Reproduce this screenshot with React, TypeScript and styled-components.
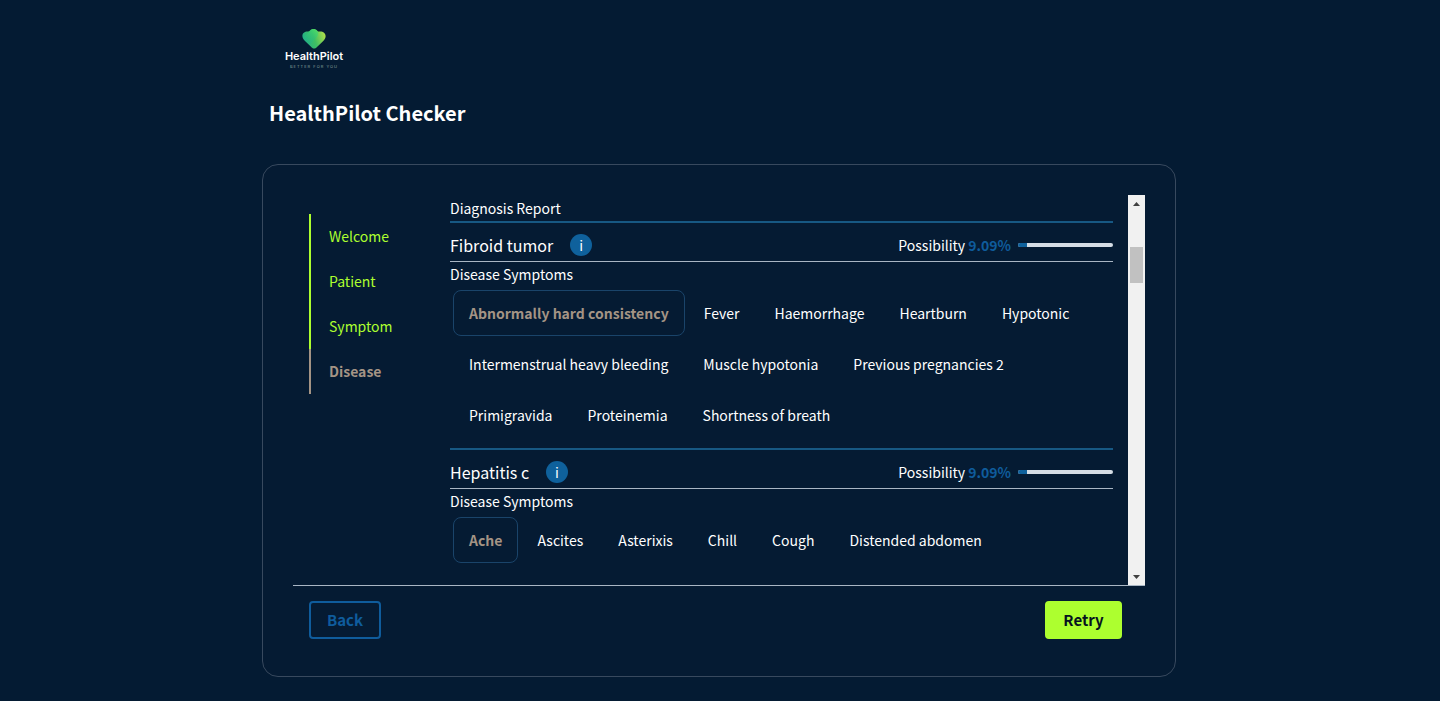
import React from "react";
import styled, { createGlobalStyle } from "styled-components";

const color = {
  page: "#041b33",
  card: "#051b33",
  text: "#ffffff",
  lime: "#adff2f",
  tan: "#a49485",
  blue: "#0f5c9c",
  badge: "#0f619c",
  rule: "#175883",
  outline: "#38495e",
  line: "#a9b6c4",
};

const GlobalStyle = createGlobalStyle`
  *, *::before, *::after { box-sizing: border-box; }
  body {
    margin: 0;
    background: ${color.page};
    color: ${color.text};
    font-family: "Noto Sans CJK SC", "Noto Sans", sans-serif;
    font-size: 14px;
    line-height: 20px;
  }
  button { font-family: inherit; cursor: pointer; }
`;

const Page = styled.div`
  min-height: 100vh;
  padding: 28px 18px 24px 16px;
`;

const Shell = styled.div`
  max-width: 914px;
  margin: 0 auto;
`;

const Brand = styled.a`
  display: flex;
  flex-direction: column;
  align-items: center;
  width: 60px;
  margin-left: 22px;
  color: inherit;
  text-decoration: none;
`;

const BrandName = styled.span`
  font: 600 11px/15px Inter, sans-serif;
`;

const Tagline = styled.span`
  font: 400 4px/5px Inter, sans-serif;
  letter-spacing: 1px;
  white-space: nowrap;
  color: #86a09c;
`;

const Title = styled.h1`
  margin: 28px 0 35px 7px;
  font-size: 20px;
  line-height: 32px;
  font-weight: 700;
`;

const Card = styled.main`
  padding: 30px 30px 37px;
  background: ${color.card};
  border: 1px solid ${color.outline};
  border-radius: 16px;
`;

const Body = styled.div`
  display: flex;
  height: calc(100vh - 310px);
  min-height: 240px;
  border-bottom: 1px solid ${color.line};
`;

const Steps = styled.ol`
  flex: 0 0 141px;
  margin: 0;
  padding: 19px 0 0;
  list-style: none;
`;

const Step = styled.li<{ $current?: boolean }>`
  margin-left: 16px;
  padding-left: 18px;
  border-left: 2px solid ${(p) => (p.$current ? color.tan : color.lime)};
  line-height: 45px;
  font-weight: ${(p) => (p.$current ? 700 : 400)};

  a {
    color: ${(p) => (p.$current ? color.tan : color.lime)};
    text-decoration: none;
  }
`;

const Report = styled.div`
  flex: 1;
  min-width: 0;
  margin-left: 16px;
  overflow: hidden;
`;

const ReportTitle = styled.h2`
  margin: 0;
  padding: 3px 0;
  font-size: 14px;
  font-weight: 400;
`;

const Disease = styled.section`
  padding-bottom: 10px;
  border-top: 2px solid ${color.rule};
`;

const DiseaseHeader = styled.header`
  display: flex;
  align-items: center;
  height: 39px;
  padding-top: 6px;
  border-bottom: 1px solid ${color.line};
`;

const DiseaseName = styled.h3`
  margin: 0 17px 0 0;
  font-size: 16px;
  font-weight: 400;
`;

const InfoButton = styled.button`
  width: 22px;
  height: 22px;
  padding: 0;
  border: 0;
  border-radius: 50%;
  background: ${color.badge};
  color: ${color.text};
  font-size: 14px;
  line-height: 22px;
`;

const Possibility = styled.label`
  display: flex;
  align-items: center;
  margin-left: auto;
`;

const Percent = styled.strong`
  margin: 0 7px 0 3px;
  color: ${color.blue};
`;

const Meter = styled.progress`
  appearance: none;
  width: 95px;
  height: 4px;
  border: 0;
  border-radius: 2px;
  overflow: hidden;
  background: #d5dde5;

  &::-webkit-progress-bar { background: #d5dde5; }
  &::-webkit-progress-value { background: ${color.badge}; }
`;

const SymptomsTitle = styled.h4`
  margin: 0;
  font-size: 14px;
  line-height: 25px;
  font-weight: 400;
`;

const Symptoms = styled.ul`
  display: flex;
  flex-wrap: wrap;
  gap: 5px 3px;
  margin: 3px 0 0;
  padding: 0 0 0 3px;
  list-style: none;
`;

const Symptom = styled.li<{ $matched?: boolean }>`
  padding: 0 15px;
  border: 1px solid ${(p) => (p.$matched ? "#1a446a" : "transparent")};
  border-radius: 8px;
  color: ${(p) => (p.$matched ? color.tan : color.text)};
  font-weight: ${(p) => (p.$matched ? 700 : 400)};
  line-height: 44px;
  white-space: nowrap;
`;

const ScrollTrack = styled.div`
  display: flex;
  flex-direction: column;
  align-items: center;
  width: 17px;
  margin-left: 15px;
  background: #f1f1f1;
`;

const ScrollButton = styled.button`
  display: flex;
  align-items: center;
  justify-content: center;
  width: 17px;
  height: 17px;
  padding: 0;
  border: 0;
  background: transparent;
`;

const ScrollThumb = styled.div`
  width: 13px;
  height: 36px;
  margin: 35px 0 auto;
  background: #c1c1c1;
`;

const Actions = styled.footer`
  display: flex;
  justify-content: space-between;
  padding: 15px 23px 0 16px;
`;

const Action = styled.button<{ $primary?: boolean }>`
  width: ${(p) => (p.$primary ? 77 : 72)}px;
  height: 38px;
  padding: 0;
  border: 2px solid ${(p) => (p.$primary ? color.lime : color.blue)};
  border-radius: 4px;
  background: ${(p) => (p.$primary ? color.lime : "transparent")};
  color: ${(p) => (p.$primary ? "#06121f" : color.blue)};
  font-size: 15px;
  line-height: 20px;
  font-weight: 700;
`;

const HeartLogo = () => (
  <svg width="24" height="21" viewBox="0 0 24 21" aria-hidden="true">
    <defs>
      <linearGradient id="heart" x1="0" y1="0.6" x2="1" y2="0.3">
        <stop offset="0" stopColor="#1fae8a" />
        <stop offset="0.5" stopColor="#3fbf62" />
        <stop offset="1" stopColor="#b2e04a" />
      </linearGradient>
      <linearGradient id="fold" x1="0.7" y1="0" x2="0.2" y2="1">
        <stop offset="0" stopColor="#3ddc6e" />
        <stop offset="1" stopColor="#1aa890" stopOpacity="0.4" />
      </linearGradient>
    </defs>
    <path
      fill="url(#heart)"
      d="M12 20.600C10.800 20.600 10 19.800 9 18.800L3 13C1.300 11.300 .4 9.800 .4 8C.4 5.200 2.800 3.500 5.800 3.600C6.800 3.600 7.500 3.200 8.100 2.500C9 1.500 10.200 1.100 11.500 1.100C13.200 1.100 14.400 1.700 15.200 2.700C15.900 3.500 16.600 3.600 17.800 3.500C21 3.300 23.600 5.200 23.600 8.200C23.600 10 22.700 11.500 21 13.200L15 18.900C14 19.900 13.200 20.600 12 20.600Z"
    />
    <path
      fill="url(#fold)"
      d="M8.100 2.500C9.800 .7 13.600 .6 15.200 2.700C17.200 5.300 16 8 14 10L7.500 16.800L3.500 13C1.800 11 2 9.500 3.500 8Z"
      opacity="0.7"
    />
  </svg>
);

const Caret = ({ down }: { down?: boolean }) => (
  <svg width="7" height="4" viewBox="0 0 7 4" aria-hidden="true">
    <path fill="#404040" d={down ? "M0 0H7L3.5 4Z" : "M0 4H7L3.5 0Z"} />
  </svg>
);

const steps = ["Welcome", "Patient", "Symptom", "Disease"];

const diseases = [
  {
    name: "Fibroid tumor",
    possibility: 9.09,
    matched: "Abnormally hard consistency",
    symptoms: [
      "Abnormally hard consistency",
      "Fever",
      "Haemorrhage",
      "Heartburn",
      "Hypotonic",
      "Intermenstrual heavy bleeding",
      "Muscle hypotonia",
      "Previous pregnancies 2",
      "Primigravida",
      "Proteinemia",
      "Shortness of breath",
    ],
  },
  {
    name: "Hepatitis c",
    possibility: 9.09,
    matched: "Ache",
    symptoms: ["Ache", "Ascites", "Asterixis", "Chill", "Cough", "Distended abdomen"],
  },
];

export default function App() {
  return (
    <Page>
      <GlobalStyle />
      <Shell>
        <Brand href="#">
          <HeartLogo />
          <BrandName>HealthPilot</BrandName>
          <Tagline>BETTER FOR YOU</Tagline>
        </Brand>
        <Title>HealthPilot Checker</Title>
        <Card>
          <Body>
            <Steps>
              {steps.map((step) => (
                <Step key={step} $current={step === "Disease"}>
                  <a href={`#${step.toLowerCase()}`}>{step}</a>
                </Step>
              ))}
            </Steps>
            <Report>
              <ReportTitle>Diagnosis Report</ReportTitle>
              {diseases.map((disease) => (
                <Disease key={disease.name}>
                  <DiseaseHeader>
                    <DiseaseName>{disease.name}</DiseaseName>
                    <InfoButton type="button" aria-label={`About ${disease.name}`}>
                      i
                    </InfoButton>
                    <Possibility>
                      Possibility
                      <Percent>{disease.possibility}%</Percent>
                      <Meter max={100} value={disease.possibility} />
                    </Possibility>
                  </DiseaseHeader>
                  <SymptomsTitle>Disease Symptoms</SymptomsTitle>
                  <Symptoms>
                    {disease.symptoms.map((symptom) => (
                      <Symptom key={symptom} $matched={symptom === disease.matched}>
                        {symptom}
                      </Symptom>
                    ))}
                  </Symptoms>
                </Disease>
              ))}
            </Report>
            <ScrollTrack>
              <ScrollButton type="button" aria-label="Scroll up">
                <Caret />
              </ScrollButton>
              <ScrollThumb />
              <ScrollButton type="button" aria-label="Scroll down">
                <Caret down />
              </ScrollButton>
            </ScrollTrack>
          </Body>
          <Actions>
            <Action type="button">Back</Action>
            <Action type="button" $primary>
              Retry
            </Action>
          </Actions>
        </Card>
      </Shell>
    </Page>
  );
}
